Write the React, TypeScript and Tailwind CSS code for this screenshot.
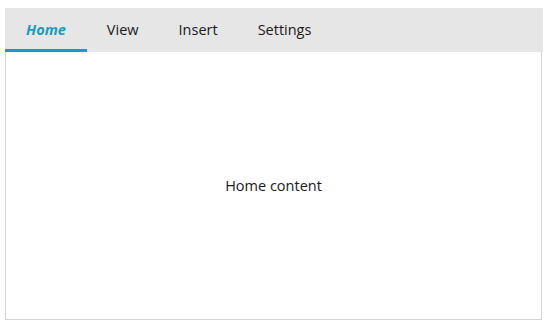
import React, { useState } from 'react';

const tabs = ['Home', 'View', 'Insert', 'Settings'];

export default function App() {
  const [active, setActive] = useState('Home');

  return (
    <div className="w-[549px] h-[326px] bg-white pt-2 pl-[5px] font-['Open_Sans',sans-serif]">
      <div className="w-[538px] flex flex-col">
        <div className="flex h-[44px] bg-[#e6e6e6]">
          {tabs.map((tab) => (
            <button
              key={tab}
              onClick={() => setActive(tab)}
              className={`relative px-5 text-[14.5px] ${
                active === tab
                  ? 'font-bold italic text-[#1a9bc1] pl-[21px] pr-[21px]'
                  : 'text-[#1a1a1a]'
              }`}
            >
              {tab}
              {active === tab && (
                <span className="absolute left-0 right-0 bottom-0 h-[3px] bg-[#1a9bc1]" />
              )}
            </button>
          ))}
        </div>
        <div className="h-[268px] mr-[1px] border border-t-0 border-[#d4d4d4] flex items-center justify-center text-[14.5px] text-[#1a1a1a]">
          {active} content
        </div>
      </div>
    </div>
  );
}
